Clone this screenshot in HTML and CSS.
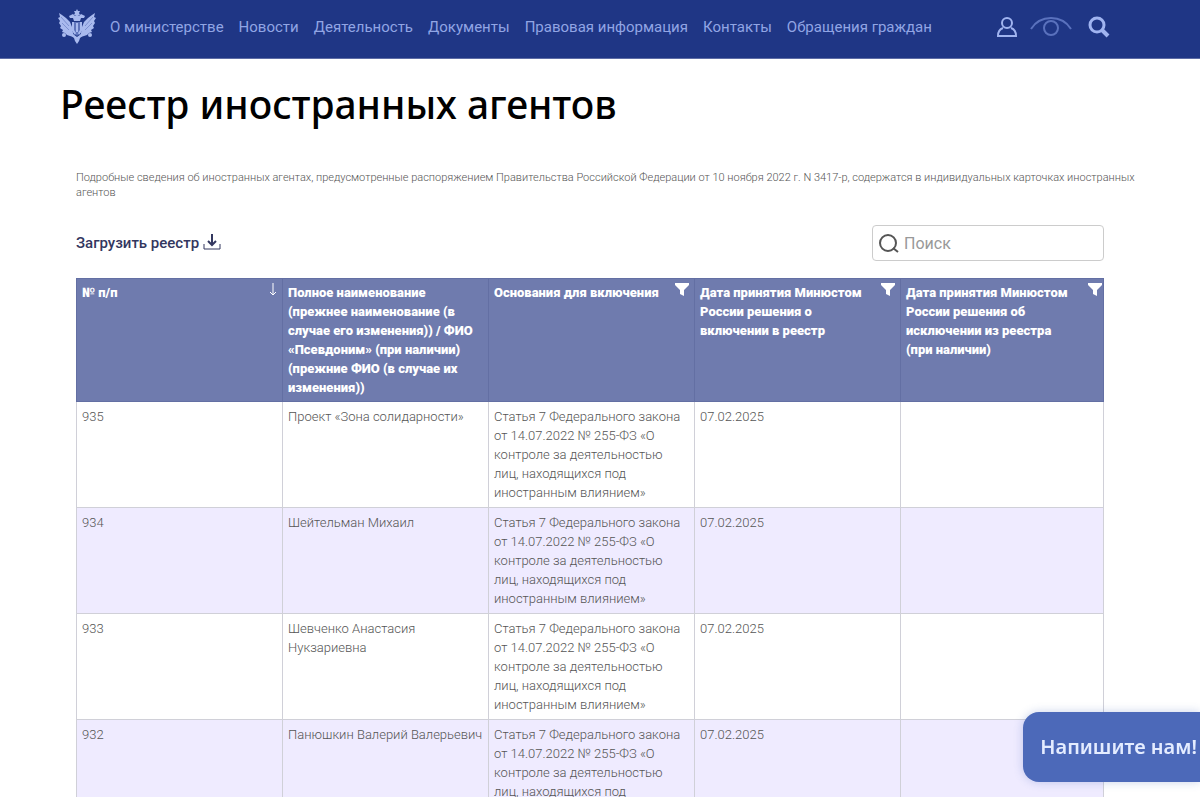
FILE: index.html
```html
<!DOCTYPE html>
<html lang="ru">
<head>
    <meta charset="UTF-8">
    <meta name="viewport" content="width=device-width, initial-scale=1.0">
    <title>Реестр иностранных агентов</title>
    <link rel="stylesheet" href="styles.css">
</head>
<body>
    <header class="header">
        <a class="logo" href="#" aria-label="Главная">
            <svg width="38" height="36" viewBox="0 0 38 36" fill="#a9baee">
                <path d="M1 4l3 2 4 3 4 4 2 5 1 6 1 4-4-1-3-1-2-2-3-1 1-2-3-2 1-2-2-3 1-2-2-3 2-1z"/>
                <path d="M37 4l-3 2-4 3-4 4-2 5-1 6-1 4 4-1 3-1 2-2 3-1-1-2 3-2-1-2 2-3-1-2 2-3-2-1z"/>
                <path d="M19 0l1 2h2l-1 2 1 2-3 1-3-1 1-2-1-2h2z"/>
                <path d="M11 7l4-2 2 2 2-1 2 1 2-2 4 2-1 2-3 0-1 3h-6l-1-3-3 0z"/>
                <path d="M14 13h10v9l-5 5-5-5z" fill="#5f74bb"/>
                <path d="M14 13h2v8l2 3-1 2-3-4zM24 13h-2v8l-2 3 1 2 3-4zM18 14h2v9h-2z"/>
                <path d="M12 26l3-1 4 3 4-3 3 1-4 3-1 3-2 3-2-3-1-3z"/>
                <circle cx="6" cy="26" r="2"/>
                <circle cx="32" cy="26" r="2"/>
                <path d="M3 8l8 9M35 8l-8 9M4 14l7 7M34 14l-7 7" stroke="#7d90d0" fill="none"/>
            </svg>
        </a>
        <nav class="nav">
            <a href="#">О министерстве</a>
            <a href="#">Новости</a>
            <a href="#">Деятельность</a>
            <a href="#">Документы</a>
            <a href="#">Правовая информация</a>
            <a href="#">Контакты</a>
            <a href="#">Обращения граждан</a>
        </nav>
        <div class="tools">
            <button type="button" aria-label="Личный кабинет">
                <svg width="22" height="22" viewBox="0 0 22 22" fill="none" stroke="#a0b4f0" stroke-width="2">
                    <circle cx="11" cy="7" r="5"/>
                    <path d="M7 12c-3 1-5 3-5 8h18c0-5-2-7-5-8"/>
                </svg>
            </button>
            <button type="button" aria-label="Версия для слабовидящих">
                <svg width="42" height="22" viewBox="0 0 42 22" fill="none" stroke="#5a71bd" stroke-width="2">
                    <path d="M1 13C6 5 13 2 21 2s15 3 20 11"/>
                    <circle cx="21" cy="12" r="7"/>
                </svg>
            </button>
            <button type="button" aria-label="Поиск по сайту">
                <svg width="22" height="22" viewBox="0 0 22 22" fill="none" stroke="#a0b4f0">
                    <circle cx="9" cy="9" r="7" stroke-width="3"/>
                    <path d="M14 14l6 6" stroke-width="4"/>
                </svg>
            </button>
        </div>
    </header>

    <main class="page">
        <h1>Реестр иностранных агентов</h1>
        <section class="registry">
            <p class="note">Подробные сведения об иностранных агентах, предусмотренные распоряжением Правительства Российской Федерации от 10 ноября 2022 г. N 3417-р, содержатся в индивидуальных карточках иностранных агентов</p>

            <div class="toolbar">
                <a class="download" href="#">Загрузить реестр
                    <svg width="18" height="18" viewBox="0 0 18 18" fill="none" stroke="#33375f" stroke-width="2">
                        <path d="M9 0v10M5 7l4 4 4-4"/>
                        <path d="M1 10v5h16v-5" stroke-width="1"/>
                    </svg>
                </a>
                <label class="search">
                    <svg width="20" height="20" viewBox="0 0 20 20" fill="none" stroke="#555" stroke-width="2">
                        <circle cx="9" cy="10" r="8"/>
                        <path d="M14 15l5 4"/>
                    </svg>
                    <input type="text" placeholder="Поиск" aria-label="Поиск">
                </label>
            </div>

            <table class="table">
                <thead>
                    <tr>
                        <th><div class="head"><span>№ п/п</span>
                            <svg width="8" height="14" viewBox="0 0 8 14" fill="none" stroke="#fff"><path d="M4 0v12M1 9l3 3 3-3"/></svg>
                        </div></th>
                        <th>Полное наименование (прежнее наименование (в случае его изменения)) / ФИО «Псевдоним» (при наличии) (прежние ФИО (в случае их изменения))</th>
                        <th><div class="head"><span>Основания для включения</span>
                            <svg width="14" height="14" viewBox="0 0 14 14" fill="#fff"><path d="M0 0h14v2L9 7v6l-4-2V7L0 2z"/></svg>
                        </div></th>
                        <th><div class="head"><span>Дата принятия Минюстом России решения о включении в реестр</span>
                            <svg width="14" height="14" viewBox="0 0 14 14" fill="#fff"><path d="M0 0h14v2L9 7v6l-4-2V7L0 2z"/></svg>
                        </div></th>
                        <th><div class="head"><span>Дата принятия Минюстом России решения об исключении из реестра (при наличии)</span>
                            <svg width="14" height="14" viewBox="0 0 14 14" fill="#fff"><path d="M0 0h14v2L9 7v6l-4-2V7L0 2z"/></svg>
                        </div></th>
                    </tr>
                </thead>
                <tbody>
                    <tr>
                        <td>935</td>
                        <td>Проект «Зона солидарности»</td>
                        <td>Статья 7 Федерального закона от 14.07.2022 № 255-ФЗ «О контроле за деятельностью лиц, находящихся под иностранным влиянием»</td>
                        <td>07.02.2025</td>
                        <td></td>
                    </tr>
                    <tr>
                        <td>934</td>
                        <td>Шейтельман Михаил</td>
                        <td>Статья 7 Федерального закона от 14.07.2022 № 255-ФЗ «О контроле за деятельностью лиц, находящихся под иностранным влиянием»</td>
                        <td>07.02.2025</td>
                        <td></td>
                    </tr>
                    <tr>
                        <td>933</td>
                        <td>Шевченко Анастасия Нукзариевна</td>
                        <td>Статья 7 Федерального закона от 14.07.2022 № 255-ФЗ «О контроле за деятельностью лиц, находящихся под иностранным влиянием»</td>
                        <td>07.02.2025</td>
                        <td></td>
                    </tr>
                    <tr>
                        <td>932</td>
                        <td>Панюшкин Валерий Валерьевич</td>
                        <td>Статья 7 Федерального закона от 14.07.2022 № 255-ФЗ «О контроле за деятельностью лиц, находящихся под иностранным влиянием»</td>
                        <td>07.02.2025</td>
                        <td></td>
                    </tr>
                </tbody>
            </table>
        </section>
    </main>

    <button class="feedback" type="button">Напишите нам!</button>
</body>
</html>
```
FILE: styles.css
```css
* {
    box-sizing: border-box;
}
body {
    margin: 0;
    font-family: Roboto, Arial, sans-serif;
    font-size: 13px;
    line-height: 19px;
    color: #555;
    background: #fff;
}
button {
    border: 0;
    padding: 0;
    background: none;
    cursor: pointer;
}
svg {
    display: block;
    flex: none;
}
a {
    text-decoration: none;
}

/* header */
.header {
    display: flex;
    align-items: center;
    height: 59px;
    padding: 0 90px 4px 58px;
    background: #1f3685;
    border-bottom: 1px solid #5d6ca5;
}
.nav {
    display: flex;
    gap: 15px;
    margin-left: 14px;
    white-space: nowrap;
}
.nav a {
    font-size: 15px;
    color: #91a5e4;
}
.tools {
    display: flex;
    align-items: center;
    gap: 14px;
    margin-left: auto;
}
.tools button:nth-child(2) {
    margin: 0 2px 0 -2px;
}

/* content */
.page {
    padding: 0 64px 0 60px;
}
h1 {
    margin: 0;
    padding-top: 20px;
    font-family: "Noto Sans", sans-serif;
    font-size: 39px;
    font-weight: 500;
    line-height: 50px;
    color: #000;
}
.registry {
    padding-left: 16px;
}
.note {
    margin: 41px 0 0;
    font-size: 11px;
    font-weight: 300;
    line-height: 15px;
}
.toolbar {
    display: flex;
    align-items: center;
    justify-content: space-between;
    margin: 25px 32px 17px 0;
}
.download {
    display: flex;
    align-items: center;
    gap: 4px;
    font-size: 15px;
    font-weight: 500;
    color: #33375f;
}
.search {
    display: flex;
    align-items: center;
    gap: 5px;
    width: 232px;
    height: 36px;
    padding: 0 6px;
    border: 1px solid #ccc;
    border-radius: 4px;
}
.search input {
    width: 100%;
    border: 0;
    padding: 0;
    outline: 0;
    font: 16px Roboto, sans-serif;
    background: none;
}
.search input::placeholder {
    color: #999;
}

/* table */
.table {
    width: calc(100% - 32px);
    table-layout: fixed;
    border-collapse: collapse;
}
.table th,
.table td {
    padding: 5px;
    border: 1px solid #d0d0d8;
    text-align: left;
    vertical-align: top;
}
.table th {
    padding: 4px 5px;
    border-color: #636fa3;
    font-weight: 900;
    color: #fff;
    background: #6f7bae;
}
.table th:last-child {
    width: 203px;
    padding-right: 1px;
}
.table td {
    font-weight: 300;
}
.table tbody tr:nth-child(even) {
    background: #efebff;
}
.head {
    display: flex;
    justify-content: space-between;
    gap: 8px;
}

.feedback {
    position: fixed;
    right: 0;
    bottom: 15px;
    padding: 24px 3px 24px 17px;
    border-radius: 16px 0 0 16px;
    font: 600 20px/22px "Noto Sans", sans-serif;
    color: #e4ecff;
    background: #4c69b9;
    box-shadow: 0 0 10px rgba(76, 105, 185, .3);
}
```
